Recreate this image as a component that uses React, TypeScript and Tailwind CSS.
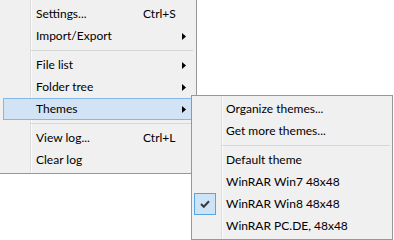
import React from "react";

const Arrow = () => (
  <svg width="4" height="7" viewBox="0 0 4 7" className="block">
    <path d="M0 0 L4 3.5 L0 7 Z" fill="#000" />
  </svg>
);

type Item =
  | { sep: true }
  | { label: string; shortcut?: string; sub?: boolean; hot?: boolean; checked?: boolean };

const mainItems: Item[] = [
  { label: "Settings...", shortcut: "Ctrl+S" },
  { label: "Import/Export", sub: true },
  { sep: true },
  { label: "File list", sub: true },
  { label: "Folder tree", sub: true },
  { label: "Themes", sub: true, hot: true },
  { sep: true },
  { label: "View log...", shortcut: "Ctrl+L" },
  { label: "Clear log" },
];

const subItems: Item[] = [
  { label: "Organize themes..." },
  { label: "Get more themes..." },
  { sep: true },
  { label: "Default theme" },
  { label: "WinRAR Win7 48x48" },
  { label: "WinRAR Win8 48x48", checked: true },
  { label: "WinRAR PC.DE, 48x48" },
];

export default function App() {
  return (
    <div
      className="relative w-[394px] h-[240px] bg-white overflow-hidden text-[12px] text-black"
      style={{ fontFamily: 'Lato, "Noto Sans", sans-serif' }}
    >
      {/* main menu */}
      <div className="w-[197px] h-[174px] border-r border-b border-[#979797] pt-[3px] pb-[2px] bg-[linear-gradient(to_right,#f0f0f0_30px,#dcdcdc_30px,#dcdcdc_31px,#fcfcfc_31px,#fcfcfc_32px,#f0f0f0_32px)]">
        {mainItems.map((it, i) =>
          "sep" in it ? (
            <div key={i} className="h-[7px] flex items-center pl-[31px] pr-[3px]">
              <div className="w-full h-[1px] bg-[#d7d7d7]" />
            </div>
          ) : (
            <div
              key={i}
              className={`ml-[3px] mr-[3px] h-[22px] border flex items-center ${
                it.hot ? "bg-[#d1e3f5] border-[#84b7e8]" : "border-transparent"
              }`}
            >
              <div className="w-[32px] shrink-0" />
              <div className="w-[107px] shrink-0 leading-[20px] whitespace-nowrap">{it.label}</div>
              <div className="w-[39px] shrink-0 leading-[20px] whitespace-nowrap">{it.shortcut ?? ""}</div>
              <div className="w-[4px] shrink-0">{it.sub ? <Arrow /> : null}</div>
            </div>
          )
        )}
      </div>

      {/* submenu (overlay) */}
      <div className="absolute left-[191px] top-[95px] w-[202px] h-[145px] border border-[#979797] pt-[2px] pb-[2px] bg-[linear-gradient(to_right,#f0f0f0_29px,#dcdcdc_29px,#dcdcdc_30px,#fcfcfc_30px,#fcfcfc_31px,#f0f0f0_31px)]">
        {subItems.map((it, i) =>
          "sep" in it ? (
            <div key={i} className="h-[7px] flex items-center pl-[30px] pr-[2px]">
              <div className="w-full h-[1px] bg-[#d7d7d7]" />
            </div>
          ) : (
            <div key={i} className="ml-[2px] mr-[2px] h-[22px] flex items-center">
              <div className="w-[22px] h-[22px] shrink-0 flex items-center justify-center">
                {it.checked ? (
                  <div className="w-[22px] h-[22px] border border-[#5aa5e0] bg-[#cde4f7] flex items-center justify-center">
                    <svg width="10" height="8" viewBox="0 0 10 8">
                      <path d="M1 4 L3.8 6.8 L9 1.2" fill="none" stroke="#3a3a3a" strokeWidth="2" />
                    </svg>
                  </div>
                ) : null}
              </div>
              <div className="w-[10px] shrink-0" />
              <div className="leading-[20px] whitespace-nowrap">{it.label}</div>
            </div>
          )
        )}
      </div>
    </div>
  );
}
